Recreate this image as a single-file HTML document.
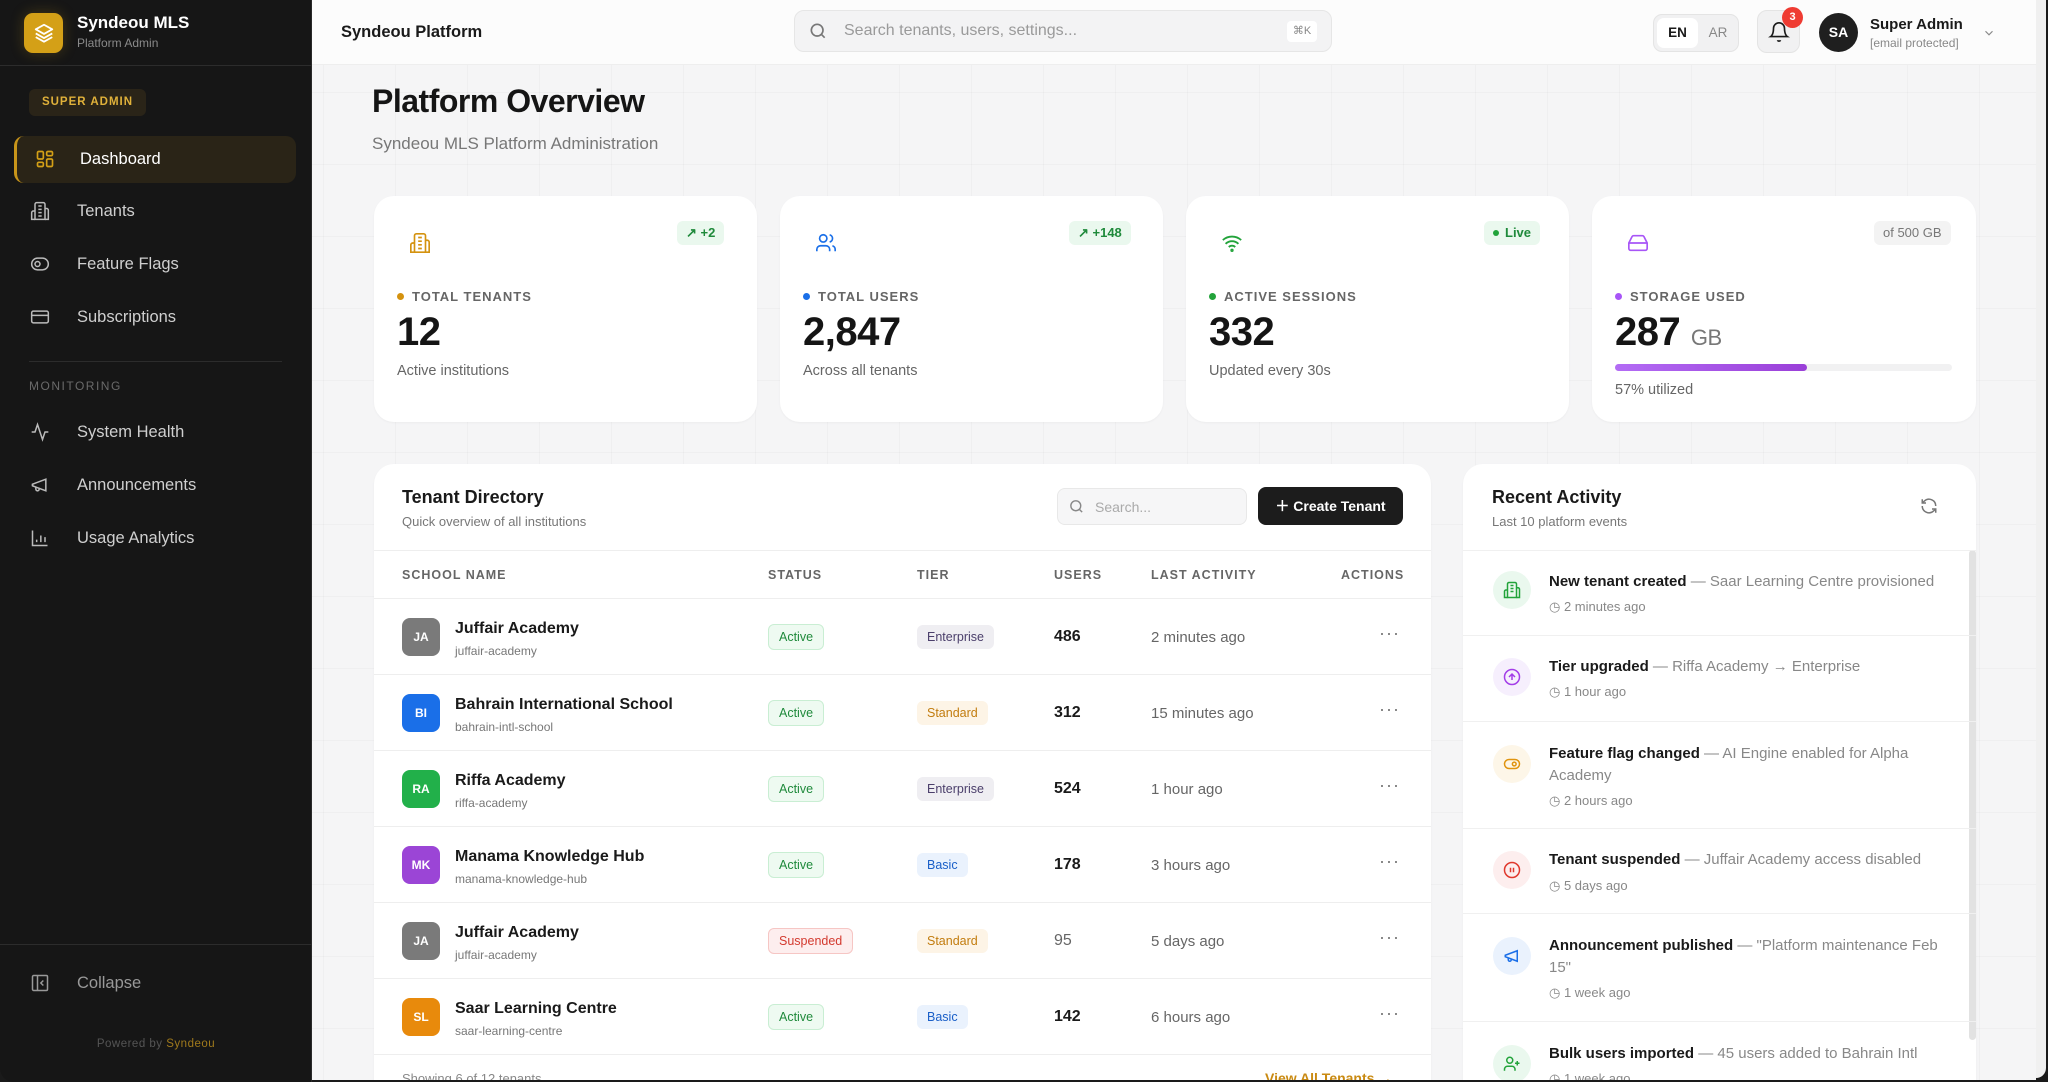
<!DOCTYPE html>
<html><head><meta charset="utf-8"><style>
*{box-sizing:border-box;margin:0;padding:0}
body{width:2048px;height:1082px;overflow:hidden;background:#1a1a1a;font-family:"Liberation Sans",sans-serif;position:relative}
.abs{position:absolute}
#side{left:0;top:0;width:312px;height:1082px;background:#161616;border-bottom-left-radius:14px;border-right:1px solid #2a2a2a}
#main{left:312px;top:0;width:1724px;height:1080px;background-color:#f5f5f6;background-image:linear-gradient(rgba(0,0,0,.025) 1px,transparent 1px),linear-gradient(90deg,rgba(0,0,0,.025) 1px,transparent 1px);background-size:72px 72px;background-position:11px 20px;overflow:hidden}
#scroll{left:2036px;top:0;width:10px;height:1078px;background:#f0f0f0;border-bottom-right-radius:10px}
.nav{position:absolute;left:14px;width:282px;height:47px;display:flex;align-items:center;color:#cfcfcf;font-size:16.5px}
.nav svg{position:absolute;left:16px;top:13px}
.nav span{position:absolute;left:63px}
.card{position:absolute;background:#fff;border-radius:20px;box-shadow:0 1px 2px rgba(0,0,0,.04)}
.lbl{position:absolute;left:23px;top:289px;font-size:13px;font-weight:bold;letter-spacing:1px;color:#666}
.dot{display:inline-block;width:7px;height:7px;border-radius:50%;margin-right:8px;vertical-align:1px}
.val{position:absolute;left:23px;top:308px;font-size:40px;font-weight:bold;color:#151515;letter-spacing:-.5px}
.sub{position:absolute;left:23px;top:362px;font-size:14.5px;color:#666}
.chip{position:absolute;top:25px;height:24px;border-radius:6px;font-size:13px;font-weight:bold;line-height:24px;padding:0 9px}
.th{position:absolute;top:566px;font-size:12.5px;font-weight:bold;letter-spacing:1px;color:#666}
.row{position:absolute;left:0;width:1057px;height:76px;border-top:1px solid #eee}
.av{position:absolute;left:28px;top:19px;width:38px;height:38px;border-radius:8px;color:#fff;font-size:12px;font-weight:bold;text-align:center;line-height:38px}
.nm{position:absolute;left:81px;top:21px;font-size:16px;font-weight:bold;color:#1a1a1a}
.sl{position:absolute;left:81px;top:45px;font-size:12px;color:#777}
.badge{position:absolute;top:25px;height:26px;line-height:24px;border-radius:6px;font-size:12.5px;padding:0 10px;border:1px solid}
.tier{position:absolute;top:26px;height:24px;line-height:24px;border-radius:6px;font-size:12.5px;padding:0 10px}
.us{position:absolute;left:680px;top:29px;font-size:16px;font-weight:bold;color:#1a1a1a}
.la{position:absolute;left:777px;top:30px;font-size:15px;color:#666}
.dots{position:absolute;left:1005px;top:24px;font-size:18px;color:#777;letter-spacing:1px}
.act{position:absolute;left:0;width:513px;border-top:1px solid #f0f0f0}
.ic{position:absolute;left:30px;width:38px;height:38px;border-radius:50%}
.ic svg{position:absolute;left:10px;top:10px}
.at{position:absolute;left:86px;width:400px;font-size:15px;line-height:22px;color:#888}
.at b{color:#1a1a1a}
.tm{position:absolute;left:86px;font-size:13px;color:#888}
</style></head><body>

<div id="side" class="abs">
  <div class="abs" style="left:24px;top:13px;width:39px;height:40px;border-radius:9px;background:#d4a017;box-shadow:0 0 14px rgba(212,160,23,.25)">
    <svg width="22" height="22" viewBox="0 0 24 24" style="position:absolute;left:8.5px;top:9px" fill="none" stroke="#fff" stroke-width="2" stroke-linejoin="round"><path d="M12 3 3 8l9 5 9-5z"/><path d="M3 12.5l9 5 9-5"/><path d="M3 16.5l9 5 9-5"/></svg>
  </div>
  <div class="abs" style="left:77px;top:13px;color:#fff;font-size:17px;font-weight:bold">Syndeou MLS</div>
  <div class="abs" style="left:77px;top:36px;color:#8a8a8a;font-size:12px">Platform Admin</div>
  <div class="abs" style="left:0;top:65px;width:312px;height:1px;background:#2c2c2c"></div>
  <div class="abs" style="left:29px;top:89px;width:117px;height:27px;border-radius:6px;background:#2a2418;color:#e0b13a;font-size:11.5px;font-weight:bold;letter-spacing:1px;text-align:center;line-height:27px">SUPER ADMIN</div>

  <div class="nav" style="top:136px;background:#2a2417;border-radius:10px;border-left:3px solid #c8951a;color:#fff">
    <svg width="20" height="20" viewBox="0 0 24 24" fill="none" stroke="#d4a017" stroke-width="2" style="left:18px"><rect x="3" y="3" width="7" height="9" rx="1.5"/><rect x="14" y="3" width="7" height="5" rx="1.5"/><rect x="14" y="12" width="7" height="9" rx="1.5"/><rect x="3" y="16" width="7" height="5" rx="1.5"/></svg>
    <span style="left:63px">Dashboard</span></div>
  <div class="nav" style="top:188px"><svg width="20" height="20" viewBox="0 0 24 24" fill="none" stroke="#bbb" stroke-width="1.8"><path d="M6 22V4a2 2 0 0 1 2-2h8a2 2 0 0 1 2 2v18z"/><path d="M6 12H4a2 2 0 0 0-2 2v8h4M18 9h2a2 2 0 0 1 2 2v11h-4M10 6h4M10 10h4M10 14h4M10 18h4"/></svg><span>Tenants</span></div>
  <div class="nav" style="top:241px"><svg width="20" height="20" viewBox="0 0 24 24" fill="none" stroke="#bbb" stroke-width="1.8"><rect x="2" y="5" width="20" height="14" rx="7"/><circle cx="9" cy="12" r="3"/></svg><span>Feature Flags</span></div>
  <div class="nav" style="top:294px"><svg width="20" height="20" viewBox="0 0 24 24" fill="none" stroke="#bbb" stroke-width="1.8"><rect x="2" y="5" width="20" height="14" rx="2"/><path d="M2 10h20"/></svg><span>Subscriptions</span></div>
  <div class="abs" style="left:29px;top:361px;width:253px;height:1px;background:#2c2c2c"></div>
  <div class="abs" style="left:29px;top:379px;color:#6a6a6a;font-size:12px;letter-spacing:1.5px">MONITORING</div>
  <div class="nav" style="top:409px"><svg width="20" height="20" viewBox="0 0 24 24" fill="none" stroke="#bbb" stroke-width="1.8"><path d="M22 12h-4l-3 9L9 3l-3 9H2"/></svg><span>System Health</span></div>
  <div class="nav" style="top:462px"><svg width="20" height="20" viewBox="0 0 24 24" fill="none" stroke="#bbb" stroke-width="1.8"><path d="m3 11 16-6v14L3 13z"/><path d="M3 11v2M7 14v3a2 2 0 0 0 4 0v-1.5"/></svg><span>Announcements</span></div>
  <div class="nav" style="top:515px"><svg width="20" height="20" viewBox="0 0 24 24" fill="none" stroke="#bbb" stroke-width="1.8"><path d="M3 3v18h18M8 17v-3M13 17V9M18 17v-6"/></svg><span>Usage Analytics</span></div>
  <div class="abs" style="left:0;top:944px;width:312px;height:1px;background:#2c2c2c"></div>
  <div class="nav" style="top:960px;color:#999"><svg width="20" height="20" viewBox="0 0 24 24" fill="none" stroke="#999" stroke-width="1.8"><rect x="3" y="3" width="18" height="18" rx="1.5"/><path d="M9 3v18M16 9l-3 3 3 3"/></svg><span>Collapse</span></div>
  <div class="abs" style="left:0;top:1038px;width:312px;text-align:center;font-size:11.5px;color:#555;letter-spacing:.5px">Powered by <span style="color:#a07a1c">Syndeou</span></div>
</div>

<div id="main" class="abs">
  <div class="abs" style="left:0;top:0;width:1724px;height:65px;background:#fcfcfc;border-bottom:1px solid #eee"></div>
  <div class="abs" style="left:29px;top:23px;font-size:16.5px;font-weight:bold;color:#1a1a1a">Syndeou Platform</div>
  <div class="abs" style="left:482px;top:10px;width:538px;height:42px;border-radius:10px;background:#f3f3f4;border:1px solid #e6e6e6">
    <svg width="20" height="20" viewBox="0 0 24 24" fill="none" stroke="#777" stroke-width="2" style="position:absolute;left:13px;top:10px"><circle cx="11" cy="11" r="7"/><path d="m20 20-4-4"/></svg>
    <div class="abs" style="left:49px;top:11px;font-size:16px;color:#9a9a9a">Search tenants, users, settings...</div>
    <div class="abs" style="left:492px;top:10px;width:30px;height:21px;background:#fff;border-radius:4px;font-size:11px;color:#888;text-align:center;line-height:21px">⌘K</div>
  </div>
  <div class="abs" style="left:1341px;top:14px;width:86px;height:38px;border-radius:9px;background:#f1f1f2;border:1px solid #e4e4e4">
    <div class="abs" style="left:3px;top:3px;width:41px;height:30px;background:#fff;border-radius:7px;font-size:13.5px;font-weight:bold;color:#1a1a1a;text-align:center;line-height:30px">EN</div>
    <div class="abs" style="left:46px;top:3px;width:36px;height:30px;font-size:13.5px;color:#888;text-align:center;line-height:30px">AR</div>
  </div>
  <div class="abs" style="left:1445px;top:10px;width:43px;height:43px;border-radius:10px;background:#f1f1f2;border:1px solid #e4e4e4">
    <svg width="22" height="22" viewBox="0 0 24 24" fill="none" stroke="#1a1a1a" stroke-width="1.8" style="position:absolute;left:10px;top:10px"><path d="M6 8a6 6 0 0 1 12 0c0 7 3 9 3 9H3s3-2 3-9"/><path d="M10.3 21a1.9 1.9 0 0 0 3.4 0"/></svg>
  </div>
  <div class="abs" style="left:1470px;top:7px;width:21px;height:21px;border-radius:50%;background:#ef3b32;color:#fff;font-size:11px;font-weight:bold;text-align:center;line-height:21px">3</div>
  <div class="abs" style="left:1507px;top:13px;width:39px;height:39px;border-radius:50%;background:#1f1f1f;color:#fff;font-size:14px;font-weight:bold;text-align:center;line-height:39px">SA</div>
  <div class="abs" style="left:1558px;top:16px;font-size:15px;font-weight:bold;color:#1a1a1a">Super Admin</div>
  <div class="abs" style="left:1558px;top:36px;font-size:12px;color:#888">[email protected]</div>
  <svg width="14" height="14" viewBox="0 0 24 24" fill="none" stroke="#888" stroke-width="2" style="position:absolute;left:1670px;top:26px"><path d="m6 9 6 6 6-6"/></svg>

  <div class="abs" style="left:60px;top:83px;font-size:32px;font-weight:bold;color:#151515;letter-spacing:-.5px">Platform Overview</div>
  <div class="abs" style="left:60px;top:134px;font-size:17px;color:#777">Syndeou MLS Platform Administration</div>

  <div class="card" style="left:62px;top:196px;width:383px;height:226px">
    <svg width="22" height="22" viewBox="0 0 24 24" fill="none" stroke="#d4920f" stroke-width="1.8" style="position:absolute;left:35px;top:36px"><path d="M6 22V4a2 2 0 0 1 2-2h8a2 2 0 0 1 2 2v18z"/><path d="M6 12H4a2 2 0 0 0-2 2v8h4M18 9h2a2 2 0 0 1 2 2v11h-4M10 6h4M10 10h4M10 14h4M10 18h4"/></svg>
    <div class="chip" style="left:303px;background:#eaf8ee;color:#1f8a3b">↗ +2</div>
    <div class="lbl" style="top:93px"><span class="dot" style="background:#d4920f"></span>TOTAL TENANTS</div>
    <div class="val" style="top:114px">12</div>
    <div class="sub" style="top:167px">Active institutions</div>
  </div>
  <div class="card" style="left:468px;top:196px;width:383px;height:226px">
    <svg width="22" height="22" viewBox="0 0 24 24" fill="none" stroke="#1a6fe8" stroke-width="1.8" style="position:absolute;left:35px;top:36px"><circle cx="9" cy="7" r="4"/><path d="M2 21v-2a4 4 0 0 1 4-4h6a4 4 0 0 1 4 4v2M16 3.1a4 4 0 0 1 0 7.8M22 21v-2a4 4 0 0 0-3-3.9"/></svg>
    <div class="chip" style="left:289px;background:#eaf8ee;color:#1f8a3b">↗ +148</div>
    <div class="lbl" style="top:93px"><span class="dot" style="background:#1a6fe8"></span>TOTAL USERS</div>
    <div class="val" style="top:114px">2,847</div>
    <div class="sub" style="top:167px">Across all tenants</div>
  </div>
  <div class="card" style="left:874px;top:196px;width:383px;height:226px">
    <svg width="22" height="22" viewBox="0 0 24 24" fill="none" stroke="#22a33a" stroke-width="2" style="position:absolute;left:35px;top:36px"><path d="M2 8.8a15 15 0 0 1 20 0M5 12.9a10 10 0 0 1 14 0M8.5 16.4a5 5 0 0 1 7 0"/><circle cx="12" cy="20" r=".8"/></svg>
    <div class="chip" style="left:298px;background:#eaf8ee;color:#1f8a3b"><span class="dot" style="background:#22a33a;width:6px;height:6px;margin-right:6px"></span>Live</div>
    <div class="lbl" style="top:93px"><span class="dot" style="background:#22a33a"></span>ACTIVE SESSIONS</div>
    <div class="val" style="top:114px">332</div>
    <div class="sub" style="top:167px">Updated every 30s</div>
  </div>
  <div class="card" style="left:1280px;top:196px;width:384px;height:226px">
    <svg width="24" height="22" viewBox="0 0 24 24" fill="none" stroke="#a855f7" stroke-width="1.8" style="position:absolute;left:34px;top:36px"><path d="M22 12H2M5.5 5.1 2 12v6a2 2 0 0 0 2 2h16a2 2 0 0 0 2-2v-6l-3.5-6.9A2 2 0 0 0 16.8 4H7.2a2 2 0 0 0-1.7 1.1M6 16h.01M10 16h.01"/></svg>
    <div class="chip" style="left:282px;background:#f3f3f3;color:#777;font-weight:normal">of 500 GB</div>
    <div class="lbl" style="top:93px"><span class="dot" style="background:#a855f7"></span>STORAGE USED</div>
    <div class="val" style="top:114px">287 <span style="font-size:22px;font-weight:normal;color:#777">GB</span></div>
    <div class="abs" style="left:23px;top:168px;width:337px;height:7px;border-radius:4px;background:#f1f1f2"><div style="width:57%;height:7px;border-radius:4px;background:linear-gradient(90deg,#b36cf5,#9a3fd8)"></div></div>
    <div class="sub" style="top:186px">57% utilized</div>
  </div>

  <div class="card" style="left:62px;top:464px;width:1057px;height:640px;overflow:hidden">
    <div class="abs" style="left:28px;top:23px;font-size:18px;font-weight:bold;color:#1a1a1a">Tenant Directory</div>
    <div class="abs" style="left:28px;top:50px;font-size:13px;color:#777">Quick overview of all institutions</div>
    <div class="abs" style="left:683px;top:24px;width:190px;height:37px;border-radius:8px;background:#f6f6f7;border:1px solid #e8e8e8">
      <svg width="17" height="17" viewBox="0 0 24 24" fill="none" stroke="#888" stroke-width="2" style="position:absolute;left:10px;top:9px"><circle cx="11" cy="11" r="7"/><path d="m20 20-4-4"/></svg>
      <div class="abs" style="left:37px;top:10px;font-size:14px;color:#aaa">Search...</div>
    </div>
    <div class="abs" style="left:884px;top:23px;width:145px;height:38px;border-radius:8px;background:#1c1c1c;color:#fff;font-size:14px;font-weight:bold;line-height:38px;text-align:center">＋ Create Tenant</div>
    <div class="abs" style="left:0;top:86px;width:1057px;height:1px;background:#eee"></div>
    <div class="th" style="left:28px;top:104px">SCHOOL NAME</div>
    <div class="th" style="left:394px;top:104px">STATUS</div>
    <div class="th" style="left:543px;top:104px">TIER</div>
    <div class="th" style="left:680px;top:104px">USERS</div>
    <div class="th" style="left:777px;top:104px">LAST ACTIVITY</div>
    <div class="th" style="left:967px;top:104px">ACTIONS</div>

    <div class="row" style="top:134px"><div class="av" style="background:#7a7a7a">JA</div><div class="nm">Juffair Academy</div><div class="sl">juffair-academy</div><div class="badge" style="left:394px;background:#eefaf1;border-color:#c9eed3;color:#1f8a3b">Active</div><div class="tier" style="left:543px;background:#efeef2;color:#4b3f6b">Enterprise</div><div class="us">486</div><div class="la">2 minutes ago</div><div class="dots">···</div></div>
    <div class="row" style="top:210px"><div class="av" style="background:#1a6fe8">BI</div><div class="nm">Bahrain International School</div><div class="sl">bahrain-intl-school</div><div class="badge" style="left:394px;background:#eefaf1;border-color:#c9eed3;color:#1f8a3b">Active</div><div class="tier" style="left:543px;background:#fdf4e6;color:#c27c0e">Standard</div><div class="us">312</div><div class="la">15 minutes ago</div><div class="dots">···</div></div>
    <div class="row" style="top:286px"><div class="av" style="background:#22b04a">RA</div><div class="nm">Riffa Academy</div><div class="sl">riffa-academy</div><div class="badge" style="left:394px;background:#eefaf1;border-color:#c9eed3;color:#1f8a3b">Active</div><div class="tier" style="left:543px;background:#efeef2;color:#4b3f6b">Enterprise</div><div class="us">524</div><div class="la">1 hour ago</div><div class="dots">···</div></div>
    <div class="row" style="top:362px"><div class="av" style="background:#9b45d6">MK</div><div class="nm">Manama Knowledge Hub</div><div class="sl">manama-knowledge-hub</div><div class="badge" style="left:394px;background:#eefaf1;border-color:#c9eed3;color:#1f8a3b">Active</div><div class="tier" style="left:543px;background:#eaf2fd;color:#1a5fc8">Basic</div><div class="us">178</div><div class="la">3 hours ago</div><div class="dots">···</div></div>
    <div class="row" style="top:438px"><div class="av" style="background:#7a7a7a">JA</div><div class="nm">Juffair Academy</div><div class="sl">juffair-academy</div><div class="badge" style="left:394px;background:#fdeeee;border-color:#f6c6c4;color:#d33a2f">Suspended</div><div class="tier" style="left:543px;background:#fdf4e6;color:#c27c0e">Standard</div><div class="us" style="font-weight:normal;color:#666">95</div><div class="la">5 days ago</div><div class="dots">···</div></div>
    <div class="row" style="top:514px"><div class="av" style="background:#e88a0c">SL</div><div class="nm">Saar Learning Centre</div><div class="sl">saar-learning-centre</div><div class="badge" style="left:394px;background:#eefaf1;border-color:#c9eed3;color:#1f8a3b">Active</div><div class="tier" style="left:543px;background:#eaf2fd;color:#1a5fc8">Basic</div><div class="us">142</div><div class="la">6 hours ago</div><div class="dots">···</div></div>
    <div class="row" style="top:590px"><div class="abs" style="left:28px;top:16px;font-size:13px;color:#888">Showing 6 of 12 tenants</div><div class="abs" style="left:891px;top:15px;font-size:14px;font-weight:bold;color:#c98a12">View All Tenants →</div></div>
  </div>

  <div class="card" style="left:1151px;top:464px;width:513px;height:640px;overflow:hidden">
    <div class="abs" style="left:29px;top:23px;font-size:18px;font-weight:bold;color:#1a1a1a">Recent Activity</div>
    <div class="abs" style="left:29px;top:50px;font-size:13px;color:#777">Last 10 platform events</div>
    <svg width="18" height="18" viewBox="0 0 24 24" fill="none" stroke="#777" stroke-width="2" style="position:absolute;left:457px;top:33px"><path d="M21 12a9 9 0 0 0-15-6.7L3 8M3 3v5h5M3 12a9 9 0 0 0 15 6.7l3-2.7M21 21v-5h-5"/></svg>
    <div class="abs" style="left:0;top:86px;width:513px;height:1px;background:#eee"></div>
    <div class="abs" style="left:506px;top:86px;width:7px;height:490px;border-radius:4px;background:#e2e2e2"></div>

    <div class="act" style="top:86px;height:85px">
      <div class="ic" style="top:20px;background:#eaf8ee"><svg width="18" height="18" viewBox="0 0 24 24" fill="none" stroke="#22a33a" stroke-width="2"><path d="M6 22V4a2 2 0 0 1 2-2h8a2 2 0 0 1 2 2v18z"/><path d="M6 12H4a2 2 0 0 0-2 2v8h4M18 9h2a2 2 0 0 1 2 2v11h-4M10 6h4M10 10h4M10 14h4"/></svg></div>
      <div class="at" style="top:20px"><b>New tenant created</b> — Saar Learning Centre provisioned</div>
      <div class="tm" style="top:48px">◷ 2 minutes ago</div></div>
    <div class="act" style="top:171px;height:86px">
      <div class="ic" style="top:22px;background:#f6effd"><svg width="18" height="18" viewBox="0 0 24 24" fill="none" stroke="#a33ee8" stroke-width="2"><circle cx="12" cy="12" r="10"/><path d="m16 12-4-4-4 4M12 16V8"/></svg></div>
      <div class="at" style="top:20px"><b>Tier upgraded</b> — Riffa Academy → Enterprise</div>
      <div class="tm" style="top:48px">◷ 1 hour ago</div></div>
    <div class="act" style="top:257px;height:107px">
      <div class="ic" style="top:23px;background:#fdf6e8"><svg width="18" height="18" viewBox="0 0 24 24" fill="none" stroke="#e0940f" stroke-width="2"><rect x="2" y="6" width="20" height="12" rx="6"/><circle cx="15" cy="12" r="2.5"/></svg></div>
      <div class="at" style="top:21px"><b>Feature flag changed</b> — AI Engine enabled for Alpha Academy</div>
      <div class="tm" style="top:71px">◷ 2 hours ago</div></div>
    <div class="act" style="top:364px;height:85px">
      <div class="ic" style="top:22px;background:#fdeeee"><svg width="18" height="18" viewBox="0 0 24 24" fill="none" stroke="#e0382d" stroke-width="2"><circle cx="12" cy="12" r="10"/><path d="M10 15V9M14 15V9"/></svg></div>
      <div class="at" style="top:20px"><b>Tenant suspended</b> — Juffair Academy access disabled</div>
      <div class="tm" style="top:49px">◷ 5 days ago</div></div>
    <div class="act" style="top:449px;height:108px">
      <div class="ic" style="top:23px;background:#eaf2fd"><svg width="18" height="18" viewBox="0 0 24 24" fill="none" stroke="#1a6fe8" stroke-width="2"><path d="m3 11 16-6v14L3 13z"/><path d="M7 14v3a2 2 0 0 0 4 0v-1.5"/></svg></div>
      <div class="at" style="top:21px"><b>Announcement published</b> — "Platform maintenance Feb 15"</div>
      <div class="tm" style="top:71px">◷ 1 week ago</div></div>
    <div class="act" style="top:557px;height:100px">
      <div class="ic" style="top:23px;background:#eaf8ee"><svg width="18" height="18" viewBox="0 0 24 24" fill="none" stroke="#22a33a" stroke-width="2"><circle cx="9" cy="7" r="4"/><path d="M2 21v-2a4 4 0 0 1 4-4h6a4 4 0 0 1 4 4v2M19 8v6M22 11h-6"/></svg></div>
      <div class="at" style="top:21px"><b>Bulk users imported</b> — 45 users added to Bahrain Intl</div>
      <div class="tm" style="top:49px">◷ 1 week ago</div></div>
  </div>
</div>
<div id="scroll" class="abs"></div>
</body></html>
